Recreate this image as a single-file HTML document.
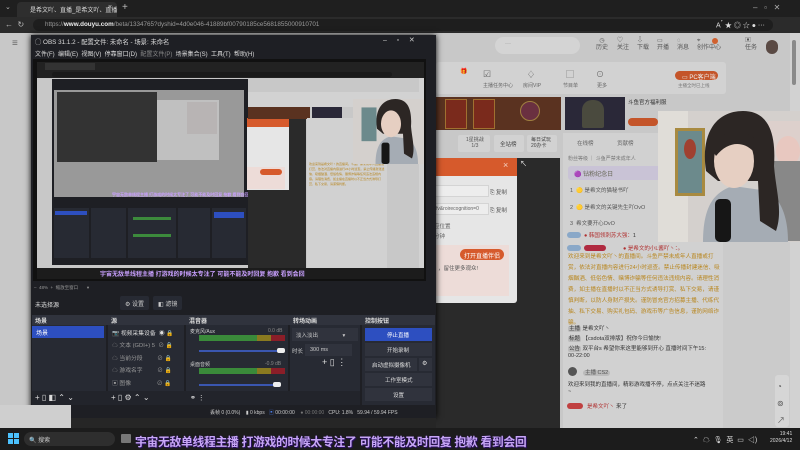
<!DOCTYPE html>
<html><head><meta charset="utf-8"><style>
*{margin:0;padding:0;box-sizing:border-box}
body{width:800px;height:450px;overflow:hidden;background:#c9c9c9;font-family:"Liberation Sans","Noto Sans CJK SC",sans-serif;position:relative}
.a{position:absolute}
.t{position:absolute;white-space:nowrap;font-size:6px;color:#ccc}
.cj{font-family:"Liberation Sans","Noto Sans CJK SC",sans-serif}
</style></head><body>

<!-- browser chrome -->
<div class="a" style="left:0;top:0;width:800px;height:17px;background:#1f1f1f"></div>
<div class="a" style="left:17px;top:2px;width:100px;height:15px;background:#2e2e2e;border-radius:4px 4px 0 0"></div>
<div class="t" style="left:30px;top:5px;color:#ddd;font-size:6px">是希文吖、直播_是希文吖、直播</div>
<div class="t" style="left:108px;top:4px;color:#ccc;font-size:7px">×</div>
<div class="t" style="left:122px;top:2px;color:#bbb;font-size:10px">+</div>
<div class="t" style="left:5px;top:3px;color:#bbb;font-size:7px">⌄</div>
<div class="t" style="left:753px;top:3px;color:#aaa;font-size:8px">–&nbsp;&nbsp;&nbsp;▫&nbsp;&nbsp;&nbsp;✕</div>
<div class="a" style="left:0;top:17px;width:800px;height:16px;background:#2b2b2b"></div>
<div class="t" style="left:5px;top:20px;color:#bbb;font-size:8px">←&nbsp; ↻</div>
<div class="a" style="left:33px;top:19px;width:740px;height:12px;background:#1e1e1e;border-radius:6px"></div>
<div class="t" style="left:45px;top:21px;color:#999;font-size:6.3px">https://<b style="color:#eee">www.douyu.com</b>/beta/1334765?dyshid=4d0e046-41889bf00790185ce5681855000910701</div>
<div class="t" style="left:716px;top:20px;color:#ddd;font-size:7px">A<sup>ᐩ</sup> ★ ◎ ☆ ● ⋯</div>

<!-- webpage dimmed -->
<div class="a" style="left:0;top:33px;width:790px;height:395px;background:#c8c8c8"></div>
<div class="a" style="left:790px;top:33px;width:10px;height:395px;background:#d2d2d2"></div>
<div class="a" style="left:792px;top:40px;width:4px;height:45px;background:#8a8a8a;border-radius:2px"></div>
<div class="t" style="left:12px;top:38px;color:#666;font-size:10px">≡</div>
<div class="a" style="left:495px;top:37px;width:85px;height:17px;background:#d4d4d4;border-radius:9px"></div>
<div class="t" style="left:505px;top:41px;color:#888;font-size:6px">···</div>
<div class="t" style="left:596px;top:38px;color:#555;font-size:6px;line-height:7px;text-align:center">◷<br>历史</div>
<div class="t" style="left:617px;top:38px;color:#555;font-size:6px;line-height:7px">♡<br>关注</div>
<div class="t" style="left:637px;top:38px;color:#555;font-size:6px;line-height:7px">⇩<br>下载</div>
<div class="t" style="left:657px;top:38px;color:#555;font-size:6px;line-height:7px">▭<br>开播</div>
<div class="t" style="left:677px;top:38px;color:#555;font-size:6px;line-height:7px">◌<br>消息</div>
<div class="a" style="left:712px;top:38px;width:6px;height:6px;border-radius:3px;background:#d0602e"></div>
<div class="t" style="left:697px;top:38px;color:#555;font-size:6px;line-height:7px">⌖<br>创作中心</div>
<div class="t" style="left:745px;top:38px;color:#555;font-size:6px;line-height:7px">▣<br>任务</div>
<div class="a" style="left:766px;top:40px;width:12px;height:14px;background:#5a4a44;border-radius:6px"></div>

<div class="a" style="left:436px;top:62px;width:290px;height:32px;background:#d2d2d2;border-radius:3px"></div>
<div class="t" style="left:460px;top:67px;color:#666;font-size:6px;line-height:10px">🎁</div>
<div class="t" style="left:483px;top:69px;color:#666;font-size:9px">☑</div>
<div class="t" style="left:483px;top:82px;color:#666;font-size:5px">主播任务中心</div>
<div class="t" style="left:527px;top:69px;color:#666;font-size:8px">♢</div>
<div class="t" style="left:523px;top:82px;color:#666;font-size:5px">房间VIP</div>
<div class="t" style="left:566px;top:69px;color:#666;font-size:8px">▢</div>
<div class="t" style="left:563px;top:82px;color:#666;font-size:5px">节目单</div>
<div class="t" style="left:596px;top:69px;color:#666;font-size:8px">⊙</div>
<div class="t" style="left:597px;top:82px;color:#666;font-size:5px">更多</div>
<div class="a" style="left:675px;top:71px;width:43px;height:9px;background:#c4552a;border-radius:5px"></div>
<div class="t" style="left:682px;top:72px;color:#eee;font-size:6px">▭ PC客户端</div>
<div class="t" style="left:678px;top:83px;color:#777;font-size:4.5px">主播全时已上线</div>

<div class="a" style="left:436px;top:97px;width:125px;height:33px;background:#5a3220"></div>
<div class="a" style="left:445px;top:99px;width:22px;height:30px;background:#7a2a1c;border:1px solid #a07030"></div>
<div class="a" style="left:473px;top:99px;width:22px;height:30px;background:#7a2a1c;border:1px solid #a07030"></div>
<div class="a" style="left:520px;top:101px;width:20px;height:20px;background:#6a3040;border-radius:10px;border:1px solid #a08040"></div>
<div class="a" style="left:565px;top:97px;width:60px;height:33px;background:#2a2838"></div>
<div class="a" style="left:582px;top:100px;width:22px;height:28px;background:#4a4a3e;border-radius:10px 10px 2px 2px"></div>
<div class="t" style="left:628px;top:98px;color:#333;font-size:5.5px">斗鱼官方福利服</div>
<div class="a" style="left:628px;top:118px;width:30px;height:8px;background:#c4552a;border-radius:4px"></div>

<div class="a" style="left:458px;top:135px;width:32px;height:17px;background:#d2d2d2;border-radius:2px"></div>
<div class="t" style="left:466px;top:137px;color:#555;font-size:5px;line-height:6px;text-align:center">1星挑战<br>1/3</div>
<div class="a" style="left:494px;top:135px;width:30px;height:17px;background:#d2d2d2;border-radius:2px"></div>
<div class="t" style="left:500px;top:140px;color:#444;font-size:5.5px">全站榜</div>
<div class="a" style="left:527px;top:135px;width:30px;height:17px;background:#d2d2d2;border-radius:2px"></div>
<div class="t" style="left:531px;top:137px;color:#444;font-size:5px;line-height:6px">每日试玩<br>20办卡</div>

<!-- chat panel -->
<div class="a" style="left:563px;top:133px;width:160px;height:295px;background:#d1d1d1"></div>
<div class="a" style="left:723px;top:133px;width:67px;height:295px;background:#cbcbcb"></div>
<div class="t" style="left:577px;top:139px;color:#666;font-size:5.5px">在线榜</div>
<div class="t" style="left:617px;top:139px;color:#666;font-size:5.5px">贡献榜</div>
<div class="t" style="left:568px;top:155px;color:#777;font-size:5px">粉丝等级 ｜ 斗鱼严禁未成年人</div>
<div class="a" style="left:568px;top:166px;width:100px;height:14px;background:#c9c3d6;border-radius:3px"></div>
<div class="t" style="left:574px;top:169px;color:#665;font-size:6px">🟣 钻粉纪念日</div>
<div class="t" style="left:570px;top:186px;color:#555;font-size:5.5px">1&nbsp;&nbsp;🟡 是希文的猫秘书吖</div>
<div class="t" style="left:570px;top:203px;color:#555;font-size:5.5px">2&nbsp;&nbsp;🟡 是希文的关键先生吖OvO</div>
<div class="t" style="left:570px;top:219px;color:#555;font-size:5.5px">3&nbsp;&nbsp;希文要开心OvO</div>
<div class="a" style="left:567px;top:232px;width:14px;height:6px;background:#8aa8c8;border-radius:3px"></div>
<div class="t" style="left:584px;top:231px;color:#b03030;font-size:5.5px">● 韩国领刺苏大强：<span style="color:#333">1</span></div>
<div class="a" style="left:567px;top:245px;width:14px;height:6px;background:#8aa8c8;border-radius:3px"></div>
<div class="a" style="left:584px;top:245px;width:22px;height:6px;background:#b02a40;border-radius:3px"></div>
<div class="t" style="left:623px;top:244px;color:#b03030;font-size:5.5px">● 是希文的小L酱吖丶：。</div>
<div class="a cj" style="left:568px;top:252px;width:152px;font-size:5.6px;line-height:11px;color:#b8861e">欢迎来到是希文吖丶的直播间。斗鱼严禁未成年人直播或打赏，依法对直播内容进行24小时巡查。禁止传播封建迷信、吸烟酗酒、低俗色情、赌博诈骗等任何违法违规内容。请理性消费，如主播在直播时以不正当方式诱导打赏、私下交易，请谨慎判断，以防人身财产损失。谨防冒充官方招募主播、代练代抽、私下交易、购买礼包码、游戏币等广告信息，谨防网络诈骗。</div>
<div class="t" style="left:568px;top:324px;color:#333;font-size:5.5px"><span style="background:#bbb;border-radius:2px;padding:0 1px">主播</span> 是希文吖丶</div>
<div class="t" style="left:568px;top:334px;color:#333;font-size:5.5px"><span style="background:#bbb;border-radius:2px;padding:0 1px">标题</span> 【csdota双排版】祝你今日愉快!</div>
<div class="t" style="left:568px;top:344px;color:#333;font-size:5.5px"><span style="background:#bbb;border-radius:2px;padding:0 1px">公告</span> 双平台s 希望你来这里能够到开心 直播时间下午15:</div>
<div class="t" style="left:568px;top:353px;color:#333;font-size:5.5px">00-22:00</div>
<div class="a" style="left:568px;top:367px;width:9px;height:9px;background:#555;border-radius:5px"></div>
<div class="t" style="left:583px;top:368px;color:#555;font-size:5.5px"><span style="background:#bbb;border-radius:3px;padding:0 2px">主播 CS2</span></div>
<div class="t" style="left:568px;top:380px;color:#333;font-size:5.5px">欢迎来到我的直播间，精彩游戏播不停，点点关注不迷路</div>
<div class="t" style="left:568px;top:389px;color:#333;font-size:5.5px">~</div>
<div class="a" style="left:567px;top:403px;width:16px;height:6px;background:#c04040;border-radius:3px"></div>
<div class="t" style="left:587px;top:402px;color:#b03030;font-size:5.5px">是希文吖丶 <span style="color:#333">来了</span></div>
<div class="a" style="left:775px;top:375px;width:14px;height:52px;background:#d6d6d6;border-radius:3px"></div>
<div class="t" style="left:777px;top:378px;color:#555;font-size:8px;line-height:17px">◔<br>⊚<br>↗</div>

<!-- webcam -->
<svg class="a" style="left:658px;top:111px" width="142" height="131" viewBox="0 0 142 131">
<rect width="142" height="131" fill="#d4d0cd"/>
<rect x="0" y="0" width="30" height="131" fill="#e0ddd8"/>
<rect x="17" y="17" width="30" height="68" fill="#a88a40"/>
<rect x="20" y="20" width="24" height="62" fill="#6c8a8c"/>
<ellipse cx="32" cy="38" rx="6" ry="10" fill="#a04030"/>
<rect x="110" y="10" width="32" height="60" fill="#ddd0cc"/>
<ellipse cx="130" cy="40" rx="12" ry="15" fill="#e8c8c0"/>
<rect x="110" y="50" width="32" height="80" fill="#888"/>
<path d="M45 131 C45 90 60 80 75 75 L110 80 C125 90 130 110 130 131 Z" fill="#a5acb4"/>
<path d="M48 60 C42 20 60 0 85 0 C112 0 118 25 116 55 C118 80 125 100 118 120 L102 110 L100 70 L60 70 Z" fill="#2c2624"/>
<ellipse cx="76" cy="50" rx="20" ry="27" fill="#e6cfc2"/>
<path d="M55 40 C60 20 80 15 98 28 L95 40 C85 30 70 30 58 45 Z" fill="#2c2624"/>
<rect x="57" y="88" width="16" height="43" rx="5" fill="#161616"/>
</svg>

<!-- dark + dialog -->
<div class="a" style="left:436px;top:158px;width:124px;height:270px;background:#2a2a2a"></div>
<div class="a" style="left:434px;top:158px;width:83px;height:145px;background:#e6e6e6;border-radius:0 0 3px 0"></div>
<div class="a" style="left:434px;top:158px;width:83px;height:18px;background:#d65a2c"></div>
<div class="t" style="left:503px;top:160px;color:#f4d0c0;font-size:9px">×</div>
<div class="a" style="left:434px;top:185px;width:55px;height:12px;background:#ededed;border:1px solid #d4d4d4"></div>
<div class="t" style="left:490px;top:188px;color:#555;font-size:5.5px">⎘ 复制</div>
<div class="a" style="left:434px;top:203px;width:55px;height:12px;background:#ededed;border:1px solid #d4d4d4"></div>
<div class="t" style="left:434px;top:206px;color:#666;font-size:5px">*fv&amp;roirecognition=0</div>
<div class="t" style="left:490px;top:206px;color:#555;font-size:5.5px">⎘ 复制</div>
<div class="t" style="left:434px;top:222px;color:#666;font-size:5.5px">应位置</div>
<div class="t" style="left:434px;top:232px;color:#666;font-size:5.5px">分钟</div>
<div class="a" style="left:434px;top:245px;width:75px;height:51px;background:#eddcd8"></div>
<div class="a" style="left:460px;top:249px;width:44px;height:11px;background:#d65a2c;border-radius:6px"></div>
<div class="t" style="left:464px;top:251px;color:#fff;font-size:6px">打开直播伴侣</div>
<div class="t" style="left:438px;top:264px;color:#555;font-size:5.5px">，留住更多观众!</div>
<div class="t" style="left:520px;top:159px;color:#eee;font-size:7px">↖</div>

<!-- OBS window -->
<div class="a" style="left:31px;top:35px;width:405px;height:383px;background:#1e1f24;box-shadow:0 0 6px #000"></div>
<div class="t" style="left:35px;top:37px;color:#ddd;font-size:6.3px">◯ OBS 31.1.2 - 配置文件: 未命名 - 场景: 未命名</div>
<div class="t" style="left:383px;top:36px;color:#ccc;font-size:7px">–&nbsp;&nbsp;&nbsp;&nbsp;&nbsp;▫&nbsp;&nbsp;&nbsp;&nbsp;&nbsp;✕</div>
<div class="t" style="left:35px;top:49px;color:#ddd;font-size:6px">文件(F)&nbsp;&nbsp;编辑(E)&nbsp;&nbsp;视图(V)&nbsp;&nbsp;停靠窗口(D)&nbsp;&nbsp;<span style="color:#888">配置文件(P)</span>&nbsp;&nbsp;场景集合(S)&nbsp;&nbsp;工具(T)&nbsp;&nbsp;帮助(H)</div>
<div class="a" style="left:33px;top:59px;width:393px;height:222px;background:#111"></div>

<!-- preview (nested screen, simplified) -->
<div class="a" style="left:37px;top:62px;width:387px;height:217px;background:#c8c8c8;overflow:hidden">
 <div class="a" style="left:0;top:0;width:387px;height:16px;background:#222"></div>
 <div class="a" style="left:8px;top:1px;width:50px;height:7px;background:#333"></div>
 <div class="a" style="left:15px;top:10px;width:340px;height:5px;background:#1a1a1a;border-radius:3px"></div>
 <div class="a" style="left:382px;top:16px;width:5px;height:190px;background:#d2d2d2"></div>
 <div class="a" style="left:15px;top:17px;width:196px;height:186px;background:#1e1f24"></div>
 <div class="a" style="left:17px;top:28px;width:190px;height:107px;background:#999"></div>
 <div class="a" style="left:20px;top:30px;width:100px;height:70px;background:#333"></div>
 <div class="a" style="left:120px;top:38px;width:62px;height:60px;background:#c0c0c0"></div>
 <div class="a" style="left:150px;top:40px;width:30px;height:32px;background:#b8b4b4"></div>
 <div class="t" style="left:75px;top:130px;color:#c9a0ff;font-size:4px;font-weight:bold">宇宙无敌单线程主播 打游戏的时候太专注了 可能不能及时回复 抱歉 看到会回</div>
 <div class="a" style="left:17px;top:146px;width:35px;height:50px;background:#272a33"></div>
 <div class="a" style="left:54px;top:146px;width:35px;height:50px;background:#272a33"></div>
 <div class="a" style="left:91px;top:146px;width:48px;height:50px;background:#272a33"></div>
 <div class="a" style="left:96px;top:155px;width:38px;height:3px;background:#3c8a3c"></div>
 <div class="a" style="left:96px;top:172px;width:38px;height:3px;background:#3c8a3c"></div>
 <div class="a" style="left:141px;top:146px;width:32px;height:50px;background:#272a33"></div>
 <div class="a" style="left:175px;top:146px;width:34px;height:50px;background:#272a33"></div>
 <div class="a" style="left:177px;top:150px;width:30px;height:6px;background:#2d4fc0"></div>
 <div class="a" style="left:18px;top:149px;width:32px;height:4px;background:#2d4fc0"></div>
 <div class="a" style="left:211px;top:56px;width:58px;height:150px;background:#2a2a2a"></div>
 <div class="a" style="left:210px;top:56px;width:42px;height:72px;background:#e6e6e6"></div>
 <div class="a" style="left:210px;top:56px;width:42px;height:9px;background:#d65a2c"></div>
 <div class="a" style="left:210px;top:105px;width:38px;height:22px;background:#eddcd8"></div>
 <div class="a" style="left:223px;top:107px;width:22px;height:6px;background:#d65a2c;border-radius:3px"></div>
 <div class="a" style="left:211px;top:30px;width:176px;height:15px;background:#d2d2d2"></div>
 <div class="a" style="left:211px;top:45px;width:62px;height:12px;background:#5a3220"></div>
 <div class="a" style="left:275px;top:45px;width:30px;height:12px;background:#2a2838"></div>
 <div class="a" style="left:270px;top:56px;width:80px;height:150px;background:#d1d1d1"></div>
 <div class="a cj" style="left:272px;top:100px;width:76px;font-size:3px;line-height:5px;color:#b8861e">欢迎来到是希文吖丶的直播间。斗鱼严禁未成年人直播或打赏，依法对直播内容进行24小时巡查。禁止传播封建迷信、吸烟酗酒、低俗色情、赌博诈骗等任何违法违规内容。请理性消费，如主播在直播时以不正当方式诱导打赏、私下交易，请谨慎判断。</div>
 <svg class="a" style="left:316px;top:37px" width="71" height="65" viewBox="0 0 142 131" preserveAspectRatio="none">
 <rect width="142" height="131" fill="#d4d0cd"/>
 <rect x="17" y="17" width="30" height="68" fill="#6c8a8c"/>
 <path d="M45 131 C45 90 60 80 75 75 L110 80 C125 90 130 110 130 131 Z" fill="#a5acb4"/>
 <path d="M48 60 C42 20 60 0 85 0 C112 0 118 25 116 55 C118 80 125 100 118 120 L102 110 L100 70 L60 70 Z" fill="#2c2624"/>
 <ellipse cx="76" cy="50" rx="20" ry="27" fill="#e6cfc2"/>
 <rect x="57" y="88" width="16" height="43" rx="5" fill="#161616"/>
 </svg>
 <div class="a" style="left:0;top:206px;width:387px;height:11px;background:#1c1c1c"></div>
 <div class="t" style="left:63px;top:207px;color:#c9a0ff;font-size:6px;font-weight:bold">宇宙无敌单线程主播 打游戏的时候太专注了 可能不能及时回复 抱歉 看到会回</div>
</div>

<div class="t" style="left:34px;top:285px;color:#999;font-size:4.5px">–&nbsp;&nbsp;48%&nbsp;&nbsp;+&nbsp;&nbsp;缩放至窗口&nbsp;&nbsp;&nbsp;&nbsp;&nbsp;&nbsp;&nbsp;▾</div>
<div class="t" style="left:35px;top:300px;color:#ddd;font-size:6px">未选择源</div>
<div class="a" style="left:120px;top:296px;width:29px;height:14px;background:#272a33;border-radius:2px"></div>
<div class="t" style="left:125px;top:299px;color:#ccc;font-size:6px">⚙ 设置</div>
<div class="a" style="left:153px;top:296px;width:29px;height:14px;background:#272a33;border-radius:2px"></div>
<div class="t" style="left:158px;top:299px;color:#ccc;font-size:6px">◧ 滤镜</div>

<!-- docks -->
<div class="a" style="left:32px;top:315px;width:74px;height:90px;background:#272a33"></div>
<div class="a" style="left:108px;top:315px;width:76px;height:90px;background:#272a33"></div>
<div class="a" style="left:186px;top:315px;width:102px;height:90px;background:#272a33"></div>
<div class="a" style="left:290px;top:315px;width:70px;height:90px;background:#272a33"></div>
<div class="a" style="left:362px;top:315px;width:73px;height:90px;background:#272a33"></div>
<div class="a" style="left:32px;top:315px;width:403px;height:10px;background:#30333d"></div>
<div class="t" style="left:35px;top:316px;color:#ddd;font-size:6px;font-weight:bold">场景</div>
<div class="t" style="left:111px;top:316px;color:#ddd;font-size:6px;font-weight:bold">源</div>
<div class="t" style="left:189px;top:316px;color:#ddd;font-size:6px;font-weight:bold">混音器</div>
<div class="t" style="left:293px;top:316px;color:#ddd;font-size:6px;font-weight:bold">转场动画</div>
<div class="t" style="left:365px;top:316px;color:#ddd;font-size:6px;font-weight:bold">控制按钮</div>
<div class="a" style="left:32px;top:326px;width:72px;height:12px;background:#2d4fc0"></div>
<div class="t" style="left:36px;top:328px;color:#fff;font-size:6px">场景</div>
<div class="t" style="left:112px;top:328px;color:#ddd;font-size:5.8px;line-height:12.4px">📷 视频采集设备&nbsp;&nbsp;◉ 🔒<br><span style="color:#999">☁ 文本 (GDI+) 5&nbsp;&nbsp;⊘ 🔒<br>☁ 当前分段&nbsp;&nbsp;&nbsp;&nbsp;&nbsp;&nbsp;&nbsp;&nbsp;&nbsp;⊘ 🔒<br>☁ 游戏名字&nbsp;&nbsp;&nbsp;&nbsp;&nbsp;&nbsp;&nbsp;&nbsp;&nbsp;⊘ 🔒<br>▣ 图像&nbsp;&nbsp;&nbsp;&nbsp;&nbsp;&nbsp;&nbsp;&nbsp;&nbsp;&nbsp;&nbsp;&nbsp;&nbsp;&nbsp;&nbsp;&nbsp;⊘ 🔒</span></div>
<div class="t" style="left:190px;top:328px;color:#ccc;font-size:5px">麦克风/Aux</div>
<div class="t" style="left:268px;top:328px;color:#888;font-size:5px">0.0 dB</div>
<div class="a" style="left:199px;top:335px;width:58px;height:6px;background:#3a8a3a"></div>
<div class="a" style="left:257px;top:335px;width:14px;height:6px;background:#8a7a20"></div>
<div class="a" style="left:271px;top:335px;width:14px;height:6px;background:#8a1e28"></div>
<div class="a" style="left:199px;top:350px;width:82px;height:2px;background:#3a56b0"></div>
<div class="a" style="left:277px;top:348px;width:8px;height:5px;background:#eee;border-radius:2px"></div>
<div class="t" style="left:190px;top:361px;color:#ccc;font-size:5px">桌面音频</div>
<div class="t" style="left:265px;top:361px;color:#888;font-size:5px">-0.9 dB</div>
<div class="a" style="left:199px;top:368px;width:58px;height:6px;background:#3a8a3a"></div>
<div class="a" style="left:257px;top:368px;width:14px;height:6px;background:#8a7a20"></div>
<div class="a" style="left:271px;top:368px;width:14px;height:6px;background:#8a1e28"></div>
<div class="a" style="left:199px;top:384px;width:80px;height:2px;background:#3a56b0"></div>
<div class="a" style="left:273px;top:382px;width:8px;height:5px;background:#eee;border-radius:2px"></div>
<div class="a" style="left:292px;top:328px;width:66px;height:13px;background:#30333d"></div>
<div class="t" style="left:296px;top:331px;color:#ccc;font-size:5.5px">淡入淡出&nbsp;&nbsp;&nbsp;&nbsp;&nbsp;&nbsp;&nbsp;&nbsp;&nbsp;&nbsp;&nbsp;&nbsp;&nbsp;&nbsp;&nbsp;&nbsp;▾</div>
<div class="t" style="left:292px;top:347px;color:#ccc;font-size:5.5px">时长</div>
<div class="a" style="left:305px;top:344px;width:47px;height:12px;background:#30333d"></div>
<div class="t" style="left:310px;top:347px;color:#ccc;font-size:5.5px">300 ms</div>
<div class="t" style="left:322px;top:357px;color:#ddd;font-size:9px">+ ▯ ⋮</div>
<div class="a" style="left:365px;top:328px;width:67px;height:13px;background:#2d4fc0"></div>
<div class="t" style="left:387px;top:331px;color:#fff;font-size:5.5px">停止直播</div>
<div class="a" style="left:365px;top:343px;width:67px;height:13px;background:#30333d"></div>
<div class="t" style="left:387px;top:346px;color:#ddd;font-size:5.5px">开始录制</div>
<div class="a" style="left:365px;top:358px;width:52px;height:13px;background:#30333d"></div>
<div class="t" style="left:372px;top:361px;color:#ddd;font-size:5.5px">启动虚拟摄像机</div>
<div class="a" style="left:419px;top:358px;width:13px;height:13px;background:#30333d"></div>
<div class="t" style="left:422px;top:360px;color:#ddd;font-size:6px">⚙</div>
<div class="a" style="left:365px;top:373px;width:67px;height:13px;background:#30333d"></div>
<div class="t" style="left:385px;top:376px;color:#ddd;font-size:5.5px">工作室模式</div>
<div class="a" style="left:365px;top:388px;width:67px;height:13px;background:#30333d"></div>
<div class="t" style="left:393px;top:391px;color:#ddd;font-size:5.5px">设置</div>
<div class="a" style="left:32px;top:391px;width:328px;height:14px;background:#22242b"></div>
<div class="t" style="left:35px;top:393px;color:#ddd;font-size:8px">+ ▯ ◧ ⌃ ⌄</div>
<div class="t" style="left:111px;top:393px;color:#ddd;font-size:8px">+ ▯ ⚙ ⌃ ⌄</div>
<div class="t" style="left:190px;top:394px;color:#ddd;font-size:7px">⚭ ⋮</div>
<div class="t" style="left:210px;top:409px;color:#ccc;font-size:5px">丢帧 0 (0.0%)&nbsp;&nbsp;&nbsp;&nbsp;▮ 0 kbps&nbsp;&nbsp;&nbsp;<span style="color:#4a7ae0">▣</span> 00:00:00&nbsp;&nbsp;&nbsp;&nbsp;<span style="color:#777">● 00:00:00</span>&nbsp;&nbsp;&nbsp;CPU: 1.8%&nbsp;&nbsp;&nbsp;59.94 / 59.94 FPS</div>

<div class="a" style="left:0;top:405px;width:71px;height:23px;background:#cfcfcf"></div>
<div class="a" style="left:71px;top:418px;width:365px;height:10px;background:#262626"></div>

<!-- taskbar -->
<div class="a" style="left:0;top:428px;width:800px;height:22px;background:#1c1c1c"></div>
<svg class="a" style="left:8px;top:433px" width="11" height="11"><rect width="5" height="5" fill="#4cc2ff"/><rect x="6" width="5" height="5" fill="#4cc2ff"/><rect y="6" width="5" height="5" fill="#4cc2ff"/><rect x="6" y="6" width="5" height="5" fill="#4cc2ff"/></svg>
<div class="a" style="left:24px;top:432px;width:91px;height:14px;background:#2e2e2e;border-radius:7px"></div>
<div class="t" style="left:29px;top:435px;color:#ccc;font-size:6px">🔍 搜索</div>
<div class="a" style="left:121px;top:434px;width:10px;height:9px;background:#777;border-radius:1px"></div>
<div class="t" style="left:135px;top:433px;color:#c7a6f5;font-size:11.8px;font-weight:bold;text-shadow:0 0 1px #2a1060,1px 1px 0 #2a1060;letter-spacing:-0.3px">宇宙无敌单线程主播 打游戏的时候太专注了 可能不能及时回复 抱歉 看到会回</div>
<div class="t" style="left:693px;top:435px;color:#ddd;font-size:7px">⌃&nbsp;&nbsp;☁&nbsp;&nbsp;🎙&nbsp;&nbsp;英&nbsp;&nbsp;▭&nbsp;&nbsp;◁)</div>
<div class="t" style="left:770px;top:431px;color:#ddd;font-size:5px;text-align:right;line-height:7px">&nbsp;&nbsp;&nbsp;&nbsp;&nbsp;&nbsp;&nbsp;19:41<br>2026/4/12</div>
</body></html>
